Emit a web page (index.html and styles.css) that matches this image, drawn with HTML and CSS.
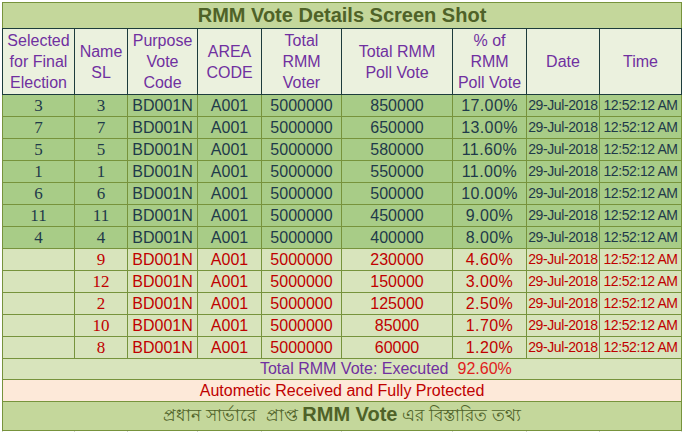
FILE: index.html
```html
<!DOCTYPE html>
<html>
<head>
<meta charset="utf-8">
<link rel="stylesheet" href="styles.css">
</head>
<body>
<table class="sheet">
  <colgroup>
    <col class="c1"><col class="c2"><col class="c3"><col class="c4"><col class="c5"><col class="c6"><col class="c7"><col class="c8"><col class="c9">
  </colgroup>
  <tr class="title"><td colspan="9">RMM Vote Details Screen Shot</td></tr>
  <tr class="head">
    <td>Selected<br>for Final<br>Election</td>
    <td>Name<br>SL</td>
    <td>Purpose<br>Vote<br>Code</td>
    <td>AREA<br>CODE</td>
    <td>Total<br>RMM<br>Voter</td>
    <td>Total RMM<br>Poll Vote</td>
    <td>% of<br>RMM<br>Poll Vote</td>
    <td>Date</td>
    <td>Time</td>
  </tr>
  <tr class="sel"><td class="n">3</td><td class="n">3</td><td>BD001N</td><td>A001</td><td>5000000</td><td>850000</td><td class="p">17.00%</td><td class="d">29-Jul-2018</td><td class="d">12:52:12 AM</td></tr>
  <tr class="sel"><td class="n">7</td><td class="n">7</td><td>BD001N</td><td>A001</td><td>5000000</td><td>650000</td><td class="p">13.00%</td><td class="d">29-Jul-2018</td><td class="d">12:52:12 AM</td></tr>
  <tr class="sel"><td class="n">5</td><td class="n">5</td><td>BD001N</td><td>A001</td><td>5000000</td><td>580000</td><td class="p">11.60%</td><td class="d">29-Jul-2018</td><td class="d">12:52:12 AM</td></tr>
  <tr class="sel"><td class="n">1</td><td class="n">1</td><td>BD001N</td><td>A001</td><td>5000000</td><td>550000</td><td class="p">11.00%</td><td class="d">29-Jul-2018</td><td class="d">12:52:12 AM</td></tr>
  <tr class="sel"><td class="n">6</td><td class="n">6</td><td>BD001N</td><td>A001</td><td>5000000</td><td>500000</td><td class="p">10.00%</td><td class="d">29-Jul-2018</td><td class="d">12:52:12 AM</td></tr>
  <tr class="sel"><td class="n">11</td><td class="n">11</td><td>BD001N</td><td>A001</td><td>5000000</td><td>450000</td><td class="p">9.00%</td><td class="d">29-Jul-2018</td><td class="d">12:52:12 AM</td></tr>
  <tr class="sel"><td class="n">4</td><td class="n">4</td><td>BD001N</td><td>A001</td><td>5000000</td><td>400000</td><td class="p">8.00%</td><td class="d">29-Jul-2018</td><td class="d">12:52:12 AM</td></tr>
  <tr class="rest"><td class="n"></td><td class="n">9</td><td>BD001N</td><td>A001</td><td>5000000</td><td>230000</td><td class="p">4.60%</td><td class="d">29-Jul-2018</td><td class="d">12:52:12 AM</td></tr>
  <tr class="rest"><td class="n"></td><td class="n">12</td><td>BD001N</td><td>A001</td><td>5000000</td><td>150000</td><td class="p">3.00%</td><td class="d">29-Jul-2018</td><td class="d">12:52:12 AM</td></tr>
  <tr class="rest"><td class="n"></td><td class="n">2</td><td>BD001N</td><td>A001</td><td>5000000</td><td>125000</td><td class="p">2.50%</td><td class="d">29-Jul-2018</td><td class="d">12:52:12 AM</td></tr>
  <tr class="rest"><td class="n"></td><td class="n">10</td><td>BD001N</td><td>A001</td><td>5000000</td><td>85000</td><td class="p">1.70%</td><td class="d">29-Jul-2018</td><td class="d">12:52:12 AM</td></tr>
  <tr class="rest"><td class="n"></td><td class="n">8</td><td>BD001N</td><td>A001</td><td>5000000</td><td>60000</td><td class="p">1.20%</td><td class="d">29-Jul-2018</td><td class="d">12:52:12 AM</td></tr>
  <tr class="total"><td colspan="6" class="tl">Total RMM Vote: Executed</td><td colspan="3" class="tr">92.60%</td></tr>
  <tr class="auto"><td colspan="9">Autometic Received and Fully Protected</td></tr>
  <tr class="bn"><td colspan="9">প্রধান সার্ভারে&nbsp; প্রাপ্ত <b>RMM Vote</b> এর বিস্তারিত তথ্য</td></tr>
  <tr class="grid"><td></td><td></td><td></td><td></td><td></td><td></td><td></td><td></td><td></td></tr>
</table>
</body>
</html>
```
FILE: styles.css
```css
html, body {
  margin: 0;
  padding: 0;
  background: #ffffff;
}
body {
  padding: 2px 0 0 2px;
  font-family: "Liberation Sans", Arial, "Noto Sans", sans-serif;
  font-size: 16px;
}
.sheet {
  border-collapse: collapse;
  table-layout: fixed;
  width: 679px;
}
.c1 { width: 72px; }
.c2 { width: 53px; }
.c3 { width: 70px; }
.c4 { width: 64px; }
.c5 { width: 80px; }
.c6 { width: 111px; }
.c7 { width: 74px; }
.c8 { width: 73px; }
.c9 { width: 82px; }
.sheet td {
  padding: 0;
  text-align: center;
  white-space: nowrap;
  overflow: hidden;
}
.title td {
  height: 25px;
  background: #c4d79b;
  color: #4f6228;
  font-weight: bold;
  font-size: 20px;
  border: 1px solid #77933c;
  border-bottom-color: #1d3c3c;
}
.head td {
  height: 65px;
  background: #ebf1de;
  color: #7030a0;
  line-height: 21px;
  border: 1px solid #1d3c3c;
  vertical-align: middle;
}
.sel td, .rest td {
  height: 21px;
  line-height: 21px;
  border: 1px solid #77933c;
}
.sel td {
  background: #a8cc87;
  color: #1f3a4a;
}
.rest td {
  background: #d8e4bc;
  color: #c00000;
}
.sheet td.n {
  font-family: "Liberation Serif", "Times New Roman", serif;
  font-size: 17px;
}
.sheet td.p {
  letter-spacing: 0.4px;
}
.sheet td.d {
  font-size: 14px;
  letter-spacing: -0.4px;
}
.total td {
  height: 20px;
  line-height: 20px;
  background: #d8e4bc;
  border-top: 1px solid #77933c;
  border-bottom: 1px solid #77933c;
}
.total td.tl {
  border-left: 1px solid #77933c;
  text-align: right;
  color: #7030a0;
  padding-right: 4px;
}
.total td.tr {
  border-right: 1px solid #77933c;
  text-align: left;
  color: #e02020;
  padding-left: 5px;
}
.auto td {
  height: 21px;
  line-height: 21px;
  background: #fde9d9;
  color: #c00000;
  border: 1px solid #77933c;
}
.bn td {
  height: 25px;
  background: #c4d79b;
  color: #4f6228;
  font-size: 17px;
  border: 1px solid #77933c;
}
.bn b {
  font-size: 20px;
}
.grid td {
  height: 6px;
  border-left: 1px solid #d4d4d4;
  border-right: 1px solid #d4d4d4;
}
```
